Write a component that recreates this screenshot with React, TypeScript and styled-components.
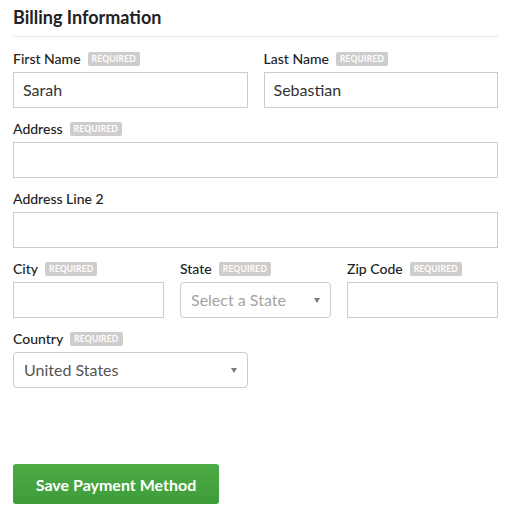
import React from "react";
import styled, { createGlobalStyle } from "styled-components";

const Global = createGlobalStyle`
  html, body { margin: 0; padding: 0; background: #fff; }
  body { font-family: Lato, "Open Sans", Arial, sans-serif; color: #222; }
  * { box-sizing: border-box; }
`;

const Page = styled.div`
  width: 512px;
  padding: 6px 14px 0 13px;
`;

const Heading = styled.h2`
  margin: 0;
  font-size: 18px;
  line-height: 22px;
  font-weight: 700;
  color: #222;
  padding-bottom: 8px;
  border-bottom: 1px solid #e6e6e6;
`;

const Form = styled.form`
  display: flex;
  flex-direction: column;
  gap: 14px;
  padding-top: 15px;
`;

const Row = styled.div<{ $cols: number }>`
  display: grid;
  grid-template-columns: repeat(${(p) => p.$cols}, 1fr);
  column-gap: 16px;
`;

const Field = styled.div`
  display: flex;
  flex-direction: column;
  gap: 6px;
`;

const Label = styled.label`
  display: flex;
  align-items: center;
  gap: 7px;
  height: 14px;
  padding-bottom: 2px;
  font-size: 14px;
  font-weight: 500;
  color: #222;
`;

const Badge = styled.span`
  display: inline-block;
  background: #cfcccc;
  color: #fff;
  font-size: 8.5px;
  font-weight: 700;
  letter-spacing: 0.2px;
  line-height: 14px;
  padding: 0 4px;
  border-radius: 2px;
  margin-top: 2px;
`;

const Input = styled.input`
  height: 36px;
  width: 100%;
  border: 1px solid #cccccc;
  border-radius: 0;
  padding: 0 9px 2px;
  font-family: inherit;
  font-size: 16px;
  color: #333;
  outline: none;
`;

const SelectBox = styled.div<{ $placeholder?: boolean }>`
  height: 36px;
  width: 100%;
  border: 1px solid #cccccc;
  border-radius: 4px;
  padding: 0 10px 2px 10px;
  display: flex;
  align-items: center;
  font-size: 16px;
  color: ${(p) => (p.$placeholder ? "#a3a3a3" : "#555")};
`;

const Caret = styled.span`
  margin-left: auto;
  margin-top: 2px;
  width: 0;
  height: 0;
  border-left: 3.5px solid transparent;
  border-right: 3.5px solid transparent;
  border-top: 5px solid #7a7a7a;
`;

const Half = styled.div`
  width: 235px;
`;

const ButtonWrap = styled.div`
  padding-top: 76px;
`;

const Button = styled.button`
  width: 206px;
  height: 40px;
  border: none;
  border-radius: 3px;
  background: linear-gradient(#4cab44, #3e9c3a);
  color: #fff;
  font-family: inherit;
  font-size: 16px;
  font-weight: 700;
  cursor: pointer;
`;

const Req = () => <Badge>REQUIRED</Badge>;

export default function App() {
  return (
    <Page>
      <Global />
      <Heading>Billing Information</Heading>
      <Form onSubmit={(e) => e.preventDefault()}>
        <Row $cols={2}>
          <Field>
            <Label>First Name <Req /></Label>
            <Input defaultValue="Sarah" />
          </Field>
          <Field>
            <Label>Last Name <Req /></Label>
            <Input defaultValue="Sebastian" />
          </Field>
        </Row>
        <Field>
          <Label>Address <Req /></Label>
          <Input />
        </Field>
        <Field>
          <Label>Address Line 2</Label>
          <Input />
        </Field>
        <Row $cols={3}>
          <Field>
            <Label>City <Req /></Label>
            <Input />
          </Field>
          <Field>
            <Label>State <Req /></Label>
            <SelectBox $placeholder>
              Select a State
              <Caret />
            </SelectBox>
          </Field>
          <Field>
            <Label>Zip Code <Req /></Label>
            <Input />
          </Field>
        </Row>
        <Half>
          <Field>
            <Label>Country <Req /></Label>
            <SelectBox>
              United States
              <Caret />
            </SelectBox>
          </Field>
        </Half>
      </Form>
      <ButtonWrap>
        <Button>Save Payment Method</Button>
      </ButtonWrap>
    </Page>
  );
}
